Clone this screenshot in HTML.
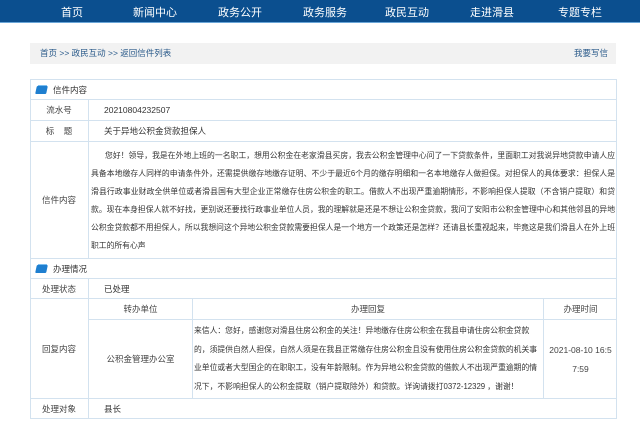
<!DOCTYPE html>
<html><head><meta charset="utf-8"><style>
*{margin:0;padding:0;box-sizing:border-box}
body{width:640px;height:429px;background:#fff;font-family:"Liberation Sans","Noto Sans CJK SC",sans-serif;color:#333;font-size:8.5px;position:relative;overflow:hidden}
.nav{position:absolute;left:0;top:0;width:640px;height:23px;background:#0b4f8f;border-bottom:1px solid #6aa6d8}
.nav span{position:absolute;top:4px;color:#fff;font-size:11px;transform:translateX(-50%);white-space:nowrap}
.bc{position:absolute;left:30px;top:43px;width:586px;height:21px;background:#f2f2f2;font-size:8.5px;color:#2a5a8a;line-height:21px;padding-left:10px}
.bc .r{position:absolute;right:8px;top:0}
.box{position:absolute;border:1px solid #d3e2ef}
.c{position:absolute;border-top:1px solid #d3e2ef;border-left:1px solid #d3e2ef;display:flex;align-items:center;overflow:hidden}
.lab{justify-content:center;color:#444}
.ic{display:inline-block;width:11px;height:8px;background:#1e7fd0;margin:0 6px 0 6px;border-radius:1px;transform:skewX(-12deg);box-shadow:0 -2px 0 -1px #7bbef0}
.ln{display:block;text-align:justify;text-align-last:justify;white-space:nowrap;height:18px;line-height:18px;font-size:7.8px}
.ln.l{text-align-last:left}
.rp .ln{font-size:7.8px;height:18.5px;line-height:18.5px}
</style></head><body>
<div class="nav">
<span style="left:72px">首页</span><span style="left:155px">新闻中心</span><span style="left:240px">政务公开</span><span style="left:325px">政务服务</span><span style="left:407px">政民互动</span><span style="left:492px">走进滑县</span><span style="left:580px">专题专栏</span>
</div>
<div class="bc">首页 &gt;&gt; 政民互动 &gt;&gt; 返回信件列表<span class="r">我要写信</span></div>

<div class="box" style="left:30px;top:79px;width:587px;height:340px"></div>
<div class="c" style="left:30px;top:79px;width:587px;height:20px;border-left:none"><span class="ic"></span>信件内容</div>
<div class="c lab" style="left:30px;top:99px;width:58px;height:21px;border-left:none">流水号</div>
<div class="c" style="left:88px;top:99px;width:529px;height:21px;padding-left:15px">20210804232507</div>
<div class="c lab" style="left:30px;top:120px;width:58px;height:21px;border-left:none">标&nbsp;&nbsp;&nbsp;&nbsp;题</div>
<div class="c" style="left:88px;top:120px;width:529px;height:21px;padding-left:15px">关于异地公积金贷款担保人</div>
<div class="c lab" style="left:30px;top:141px;width:58px;height:117px;border-left:none">信件内容</div>
<div class="c" style="left:88px;top:141px;width:529px;height:117px;padding:5px 2px 0 2px;display:block">
<span class="ln" style="padding-left:14px">您好！领导，我是在外地上班的一名职工，想用公积金在老家滑县买房，我去公积金管理中心问了一下贷款条件，里面职工对我说异地贷款申请人应</span>
<span class="ln">具备本地缴存人同样的申请条件外，还需提供缴存地缴存证明、不少于最近6个月的缴存明细和一名本地缴存人做担保。对担保人的具体要求：担保人是</span>
<span class="ln">滑县行政事业财政全供单位或者滑县国有大型企业正常缴存住房公积金的职工。借款人不出现严重逾期情形，不影响担保人提取（不含销户提取）和贷</span>
<span class="ln">款。现在本身担保人就不好找，更别说还要找行政事业单位人员，我的理解就是还是不想让公积金贷款，我问了安阳市公积金管理中心和其他邻县的异地</span>
<span class="ln">公积金贷款都不用担保人，所以我想问这个异地公积金贷款需要担保人是一个地方一个政策还是怎样？还请县长重视起来，毕竟这是我们滑县人在外上班</span>
<span class="ln l">职工的所有心声</span>
</div>
<div class="c" style="left:30px;top:258px;width:587px;height:20px;border-left:none"><span class="ic"></span>办理情况</div>
<div class="c lab" style="left:30px;top:278px;width:58px;height:20px;border-left:none">处理状态</div>
<div class="c" style="left:88px;top:278px;width:529px;height:20px;padding-left:15px">已处理</div>
<div class="c lab" style="left:30px;top:298px;width:58px;height:100px;border-left:none">回复内容</div>
<div class="c lab" style="left:88px;top:298px;width:104px;height:21px">转办单位</div>
<div class="c lab" style="left:192px;top:298px;width:351px;height:21px">办理回复</div>
<div class="c lab" style="left:543px;top:298px;width:74px;height:21px">办理时间</div>
<div class="c lab" style="left:88px;top:319px;width:104px;height:79px">公积金管理办公室</div>
<div class="c rp" style="left:192px;top:319px;width:351px;height:79px;display:block;padding:2px 10px 0 1px">
<span class="ln l">来信人：您好，感谢您对滑县住房公积金的关注！异地缴存住房公积金在我县申请住房公积金贷款</span>
<span class="ln">的，须提供自然人担保，自然人须是在我县正常缴存住房公积金且没有使用住房公积金贷款的机关事</span>
<span class="ln">业单位或者大型国企的在职职工，没有年龄限制。作为异地公积金贷款的借款人不出现严重逾期的情</span>
<span class="ln l">况下，不影响担保人的公积金提取（销户提取除外）和贷款。详询请拨打0372-12329 ，谢谢！</span>
</div>
<div class="c" style="left:543px;top:319px;width:74px;height:79px;display:block;text-align:center;padding-top:21px;line-height:19px;color:#444;white-space:nowrap">2021-08-10 16:5<br>7:59</div>
<div class="c lab" style="left:30px;top:398px;width:58px;height:21px;border-left:none">处理对象</div>
<div class="c" style="left:88px;top:398px;width:529px;height:21px;padding-left:15px">县长</div>
</body></html>
